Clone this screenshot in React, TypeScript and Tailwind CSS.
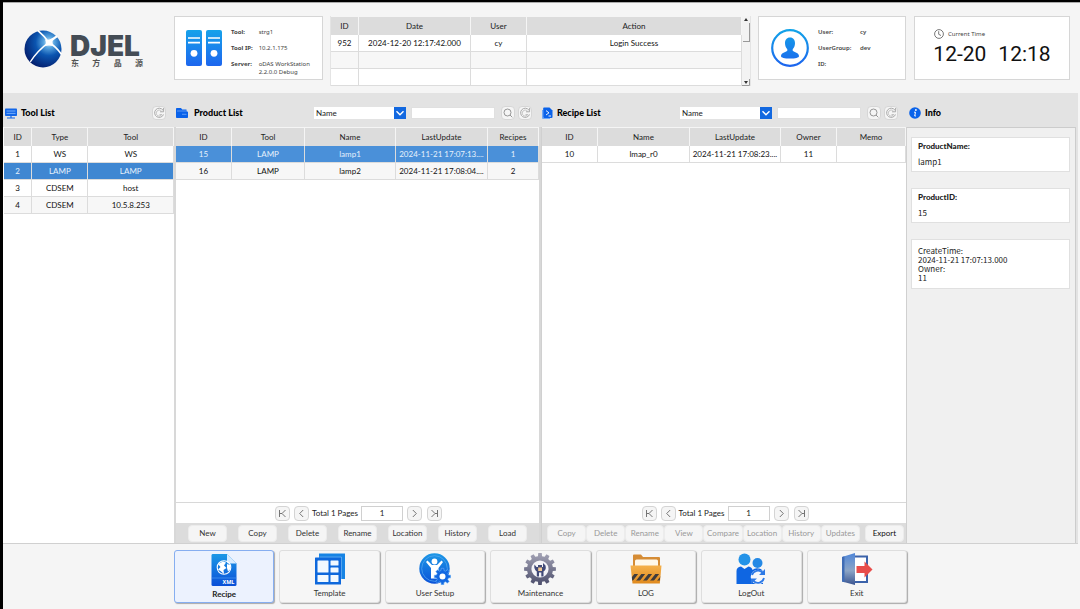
import React from "react";

const cell = "h-[17px] overflow-hidden whitespace-nowrap border-b border-r border-[#dcdcdc] p-0 text-center font-normal";

type TableProps = {
  label: string;
  widths: number[];
  heads: string[];
  rows: string[][];
  selected?: number;
  tone?: string;
};

function DataTable({ label, widths, heads, rows, selected = -1, tone = "bg-[#4a90d9]" }: TableProps) {
  const total = widths.reduce((a, b) => a + b, 0);
  return (
    <table aria-label={label} className="w-full table-fixed border-separate border-spacing-0 text-[8px] leading-3 text-[#111]">
      <colgroup>
        {widths.map((w, i) => (
          <col key={i} style={{ width: `${(w / total) * 100}%` }} />
        ))}
      </colgroup>
      <thead>
        <tr>
          {heads.map((h) => (
            <th key={h} scope="col" className="h-[19px] border-r border-t border-[#f5f5f5] bg-[#dcdcdc] p-0 text-center font-normal text-[#222]">
              {h}
            </th>
          ))}
        </tr>
      </thead>
      <tbody>
        {rows.map((r, i) => (
          <tr key={i} className={i === selected ? `${tone} text-[#e6f1fc]` : i % 2 ? "bg-[#f7f7f7]" : "bg-white"}>
            {r.map((c, j) => (
              <td key={j} className={cell}>
                {c}
              </td>
            ))}
          </tr>
        ))}
      </tbody>
    </table>
  );
}

function Globe() {
  return (
    <svg viewBox="0 0 40 40" className="size-[38px] shrink-0" aria-hidden="true">
      <defs>
        <radialGradient id="globe" cx="0.66" cy="0.32" r="0.72">
          <stop offset="0" stopColor="#e8f7ff" />
          <stop offset="0.2" stopColor="#5aa6e0" />
          <stop offset="0.5" stopColor="#0b55b0" />
          <stop offset="1" stopColor="#04206f" />
        </radialGradient>
      </defs>
      <circle cx="20" cy="20" r="19.5" fill="url(#globe)" />
      <g stroke="#fff" fill="none" strokeLinecap="round">
        <path d="M15 1 Q21 6 26 13" strokeWidth="1.8" />
        <path d="M26 13 Q33 17 39 25" strokeWidth="1.8" />
        <path d="M26 13 Q14 22 7 33" strokeWidth="1.4" />
        <path d="M26 13 L34 7" strokeWidth="2.4" />
      </g>
      <path d="M22 10 Q26 11.500 31 8 Q29 13 31 17 Q26 15.500 22 17 Q24 13 22 10Z" fill="#fff" />
    </svg>
  );
}

function Servers() {
  return (
    <svg viewBox="0 0 36 36" className="size-9 shrink-0" aria-hidden="true">
      <defs>
        <linearGradient id="srv" x1="0" y1="0" x2="0" y2="1">
          <stop offset="0" stopColor="#17a2ea" />
          <stop offset="1" stopColor="#1d66ee" />
        </linearGradient>
      </defs>
      {[0, 20].map((x) => (
        <g key={x}>
          <rect x={x} y="0" width="16" height="36" rx="2" fill="url(#srv)" />
          <path d={`M${x + 2} 8h12M${x + 2} 12.7h12`} stroke="#fff" strokeWidth="1.7" />
          <circle cx={x + 8} cy="23.3" r="3.4" fill="#fff" />
        </g>
      ))}
    </svg>
  );
}

function Avatar() {
  return (
    <svg viewBox="0 0 38 38" className="size-[38px] shrink-0" aria-hidden="true">
      <defs>
        <linearGradient id="ava" x1="0" y1="0" x2="0" y2="38" gradientUnits="userSpaceOnUse">
          <stop offset="0" stopColor="#12a5e8" />
          <stop offset="1" stopColor="#1d63ee" />
        </linearGradient>
      </defs>
      <circle cx="19" cy="19" r="17.8" fill="none" stroke="url(#ava)" strokeWidth="2.2" />
      <path d="M19 8.6c3.4 0 5 2.5 5 5.6 0 2.6-1 4.600-2.300 6v1.500c1.500 1.300 6.300 2 6.300 5.300 0 1.800-3.600 2.600-9 2.600s-9-.8-9-2.600c0-3.300 4.800-4 6.300-5.300v-1.500c-1.300-1.400-2.300-3.400-2.300-6 0-3.100 1.600-5.600 5-5.600Z" fill="url(#ava)" />
    </svg>
  );
}

function ClockIcon() {
  return (
    <svg viewBox="0 0 10 10" className="size-[10px]" fill="none" stroke="#555" strokeWidth="0.8" aria-hidden="true">
      <circle cx="5" cy="5" r="4.4" />
      <path d="M4.700 2.200V5.300L7 6.500" />
    </svg>
  );
}

const ToolListIcon = () => (
  <svg viewBox="0 0 12 11" className="h-[11px] w-3" aria-hidden="true">
    <rect y="0.500" width="12" height="7.500" rx="0.800" fill="#1266e8" />
    <path d="M1.500 3h9M1.500 5.400h9" stroke="#8fc0ff" strokeWidth="0.800" />
    <path d="M6 8v1.800M2 10h8" stroke="#1266e8" strokeWidth="1.200" />
  </svg>
);
const ProductIcon = () => (
  <svg viewBox="0 0 12 10" className="h-[10px] w-3" aria-hidden="true">
    <path d="M0 .800Q0 0 .800 0H5L6.200 1.500H10.500V3.500H11.200Q12 3.500 12 4.300V9.200Q12 10 11.200 10H.800Q0 10 0 9.200Z" fill="#0a62ea" />
    <path d="M1 3h9M6 6.300h4.500" stroke="#7fb2fb" strokeWidth="0.700" />
  </svg>
);
const RecipeIcon = () => (
  <svg viewBox="0 0 11 12" className="h-3 w-[11px]" aria-hidden="true">
    <path d="M2 0.500H7.500L10.500 3.500V10Q10.500 11 9.500 11H2Q1.200 11 1.200 10V1.500Q1.200 .500 2 .500Z" fill="#0a62ea" />
    <path d="M0.500 3V11.500H8" stroke="#6ea8f8" fill="none" />
    <path d="M4 3.600l3 2.200L4 8M6.500 9h2.500" stroke="#fff" strokeWidth="0.900" fill="none" />
  </svg>
);
const InfoIcon = () => (
  <svg viewBox="0 0 12 12" className="size-3" aria-hidden="true">
    <circle cx="6" cy="6" r="5.800" fill="#0a63ea" />
    <circle cx="6.900" cy="3" r="0.900" fill="#fff" />
    <path d="M5 5.200h1.500L5.700 9q.500.300 1.300-.300" stroke="#fff" fill="none" strokeWidth="1" />
  </svg>
);

const miniButton = "flex size-[14px] shrink-0 items-center justify-center rounded-sm border border-[#d6d6d6] bg-[#f5f5f5] p-0";

function RefreshButton({ label }: { label: string }) {
  return (
    <button type="button" aria-label={label} className={miniButton}>
      <svg viewBox="0 0 12 12" className="size-3 shrink-0" fill="none" aria-hidden="true">
        <path d="M10 3.200A4.600 4.600 0 1 0 10.500 7.500" stroke="#aaa" strokeWidth="1" />
        <path d="M8.600 4.200A3 3 0 1 0 8.900 7.500H6.500" stroke="#b5b5b5" strokeWidth="0.800" />
        <path d="M10.600 1v3.800H7" stroke="#aaa" strokeWidth="1" />
      </svg>
    </button>
  );
}

function SearchButton({ label }: { label: string }) {
  return (
    <button type="button" aria-label={label} className={miniButton}>
      <svg viewBox="0 0 10 10" className="size-[10px] shrink-0" fill="none" stroke="#8c8c8c" strokeWidth="0.900" aria-hidden="true">
        <circle cx="4.500" cy="4.500" r="3.500" />
        <path d="M7 7l2.300 2.300" />
      </svg>
    </button>
  );
}

function Filter({ name }: { name: string }) {
  return (
    <div className="flex items-center">
      <div className="relative mr-[5px] flex h-3 w-[92px]">
        <select aria-label={`${name} filter field`} className="h-3 w-full appearance-none rounded-none bg-white pl-[2px] text-[8px] leading-3 text-[#222] outline-none">
          <option>Name</option>
        </select>
        <span className="pointer-events-none absolute right-0 top-0 flex size-3 items-center justify-center bg-[#1268e0]">
          <svg viewBox="0 0 10 10" className="size-[10px]" fill="none" stroke="#fff" strokeWidth="1.400" aria-hidden="true">
            <path d="M1.500 3.300L5 6.800L8.500 3.300" />
          </svg>
        </span>
      </div>
      <input type="text" aria-label={`${name} filter text`} className="mr-[6px] h-3 w-[84px] border border-[#e0e0e0] bg-white px-1 text-[8px] outline-none" />
      <div className="flex gap-[3px]">
        <SearchButton label={`Search ${name}`} />
        <RefreshButton label={`Refresh ${name}`} />
      </div>
    </div>
  );
}

function PagerButton({ label, d }: { label: string; d: string }) {
  return (
    <button type="button" aria-label={label} className="flex size-[15px] shrink-0 items-center justify-center rounded-sm border border-[#d4d4d4] bg-[#f5f5f5]">
      <svg viewBox="0 0 9 9" className="size-[9px] shrink-0" fill="none" stroke="#666" strokeWidth="0.900" aria-hidden="true">
        <path d={d} />
      </svg>
    </button>
  );
}

function Pager({ name }: { name: string }) {
  return (
    <div className="flex h-[21px] items-center justify-center border-t border-[#d8d8d8] bg-white pl-[2px] text-[8px] text-[#222]">
      <div className="flex gap-1">
        <PagerButton label={`${name} first page`} d="M1.500 1v7M7.500 1L4 4.500L7.500 8M2 4.500h2" />
        <PagerButton label={`${name} previous page`} d="M6.200 1L2.700 4.500L6.200 8" />
      </div>
      <span className="w-[52px] whitespace-nowrap text-center">Total 1 Pages</span>
      <input type="text" aria-label={`${name} page`} defaultValue="1" className="mr-1 h-[15px] w-[42px] border border-[#d0d0d0] bg-white text-center outline-none" />
      <div className="flex gap-[5px]">
        <PagerButton label={`${name} next page`} d="M2.800 1L6.300 4.500L2.800 8" />
        <PagerButton label={`${name} last page`} d="M7.500 1v7M1.500 1L5 4.500L1.500 8M5 4.500h2" />
      </div>
    </div>
  );
}

const actionButton = "h-[17px] flex-1 rounded-sm border border-[#ececec] bg-[#f5f5f5] p-0 text-center text-[8px] leading-3 whitespace-nowrap";

function Title({ icon, text, children }: { icon: React.ReactNode; text: string; children?: React.ReactNode }) {
  return (
    <div className="flex h-[34px] items-center pb-0 pt-[6px]">
      {icon}
      <h2 className="ml-1 text-[9px] font-black leading-3 text-black">{text}</h2>
      <div className="ml-auto mr-[9px]">{children}</div>
    </div>
  );
}

function InfoCard({ title, children }: { title: string; children: React.ReactNode }) {
  return (
    <section className="flex h-[35px] flex-col justify-between border border-[#e0e0e0] bg-white px-[6px] pb-[3px] pt-[2px]">
      <h3 className="font-['Lato',sans-serif] font-black leading-3">{title}</h3>
      <p className="leading-3">{children}</p>
    </section>
  );
}

const XmlIcon = () => (
  <svg viewBox="0 0 26 32" className="h-8 w-[26px]" aria-hidden="true">
    <defs>
      <linearGradient id="nb" x1="0" y1="0" x2="0" y2="32" gradientUnits="userSpaceOnUse">
        <stop offset="0" stopColor="#1c98e6" />
        <stop offset="1" stopColor="#0a4fd8" />
      </linearGradient>
    </defs>
    <path d="M1.500 0H16L25.500 9.500V30.500Q25.500 32 24 32H2Q.500 32 .500 30.500V1.500Q.500 0 1.500 0Z" fill="url(#nb)" />
    <path d="M16 0V8Q16 9.500 17.500 9.500H25.500Z" fill="#d7ebff" />
    <circle cx="13" cy="13.500" r="6.800" fill="none" stroke="#fff" strokeWidth="1.100" />
    <path d="M7 10L12 7.500L15 8.500L13 11.500L15.500 14L12.500 16L13 20L9.500 17L7 15.500L9.500 13ZM16 10L19 11L19.500 15L17 17.500L16 14Z" fill="#fff" />
    <path d="M1 24h24.500" stroke="#4c9cf2" strokeWidth="0.700" />
    <text x="11.500" y="30" fontSize="5.500" fontWeight="700" fill="#fff" fontFamily="Noto Sans">XML</text>
  </svg>
);

const TemplateIcon = () => (
  <svg viewBox="0 0 32 32" className="size-8" aria-hidden="true">
    <path d="M5 0.500H31V26H26V5H5Z" fill="#1784e4" />
    <rect x="1" y="4.500" width="26" height="27" rx="0.500" fill="#0e68dc" />
    <path d="M5.500 4H27.500V26" fill="none" stroke="#7dbbf5" strokeWidth="0.600" />
    <g fill="#f2f9ff">
      <rect x="3.500" y="7.500" width="11" height="12" rx="0.500" />
      <rect x="16.500" y="7.500" width="8" height="5" rx="0.500" />
      <rect x="16.500" y="14.500" width="8" height="5" rx="0.500" />
      <rect x="3.500" y="22" width="11" height="7" rx="0.500" />
      <rect x="16.500" y="22" width="8" height="7" rx="0.500" />
    </g>
  </svg>
);

const gearPath = (cx: number, cy: number, r: number, r2: number, n: number) => {
  const pts: string[] = [];
  for (let i = 0; i < n; i++) {
    const a = (i / n) * Math.PI * 2;
    const s = Math.PI / n;
    [[-0.6, r], [-0.42, r2], [0.42, r2], [0.6, r]].forEach(([k, q]) => {
      pts.push(`${(cx + Math.sin(a + k * s) * q).toFixed(2)} ${(cy - Math.cos(a + k * s) * q).toFixed(2)}`);
    });
  }
  return `M${pts.join("L")}Z`;
};

const UserSetupIcon = () => (
  <svg viewBox="0 0 32 32" className="size-8" aria-hidden="true">
    <circle cx="15.500" cy="15.500" r="15.200" fill="url(#nb)" />
    <circle cx="15.500" cy="15.500" r="12.800" fill="none" stroke="#58aaf0" strokeWidth="0.700" />
    <circle cx="15.500" cy="8.500" r="2.900" fill="#fff" />
    <path d="M8.500 7.500L13 12H18L22.500 7.500L24 9L19.500 15V20L18 25.500H12V15L7 9Z" fill="#fff" />
    <path d={gearPath(23.5, 23.5, 6.2, 8.3, 8)} fill="#1268e2" stroke="#6fb3f5" strokeWidth="0.600" />
    <circle cx="23.500" cy="23.500" r="3" fill="#fff" />
  </svg>
);

const MaintenanceIcon = () => (
  <svg viewBox="0 0 32 32" className="size-8" aria-hidden="true">
    <defs>
      <linearGradient id="gear" x1="0" y1="0" x2="0" y2="1">
        <stop offset="0" stopColor="#a3a3b5" />
        <stop offset="1" stopColor="#4c4e6c" />
      </linearGradient>
    </defs>
    <path d={gearPath(16, 16, 13, 16, 12)} fill="url(#gear)" />
    <circle cx="16" cy="16" r="8.600" fill="#f4f4f8" />
    <path d="M10.500 11.500L12.500 14H14V12H18V14H19V10L21.500 12.500Q22.500 17 19.500 18.500V23.500H17.300V19.500H15V23.500H12.800V18.500Q9.500 16 10.500 11.500Z" fill="#424a78" />
    <rect x="14.200" y="14.500" width="3.800" height="3.500" fill="#f0c890" />
  </svg>
);

const LogIcon = () => (
  <svg viewBox="0 0 32 32" className="size-8" aria-hidden="true">
    <defs>
      <linearGradient id="fold" x1="0" y1="0" x2="0" y2="1">
        <stop offset="0" stopColor="#f5b14c" />
        <stop offset="1" stopColor="#e08a1e" />
      </linearGradient>
      <clipPath id="foldclip"><path d="M1.500 21H30.500L29.800 27.500H2.200Z" /></clipPath>
    </defs>
    <path d="M3 2.500Q3 1.500 4 1.500H11L13 4H29Q30 4 30 5V14H3Z" fill="#d58c35" />
    <path d="M5 8Q5 6.500 6.500 6.500H26.500Q28 6.500 28 8V14H5Z" fill="#fff8ea" />
    <path d="M.500 12.500H31.500L29.800 30.500H2.500Z" fill="url(#fold)" />
    <g clipPath="url(#foldclip)" stroke="#3e3b3d" strokeWidth="3">
      <path d="M0 29L7 20M7 29L14 20M14 29L21 20M21 29L28 20M28 29L35 20" />
    </g>
  </svg>
);

const LogoutIcon = () => (
  <svg viewBox="0 0 32 32" className="size-8" aria-hidden="true">
    <circle cx="9.500" cy="6.500" r="6" fill="#2493e8" />
    <circle cx="22.500" cy="10" r="5" fill="#2589e5" />
    <path d="M1.500 31V18Q1.500 14 6 13.500L9.500 16L13.500 13.500Q17 14 17.500 17Q20 14.500 24 15.500Q28 16 28 20V31Z" fill="#0f66e2" />
    <circle cx="23" cy="24" r="7.300" fill="#f5f7fb" />
    <path d="M17 22A6.300 6.300 0 0 1 27.500 19.500M29 25A6.300 6.300 0 0 1 18.500 28" fill="none" stroke="#2d79e6" strokeWidth="1.800" />
    <path d="M30 16V22H24ZM16 31V25.500H22Z" fill="#2d79e6" />
  </svg>
);

const ExitIcon = () => (
  <svg viewBox="0 0 32 32" className="size-8" aria-hidden="true">
    <defs>
      <linearGradient id="door" x1="0" y1="0" x2="0" y2="1">
        <stop offset="0" stopColor="#4f86d8" />
        <stop offset="0.550" stopColor="#8ca5c6" />
        <stop offset="1" stopColor="#3a5490" />
      </linearGradient>
    </defs>
    <path d="M14 3.500H26V29H14" fill="#fff" stroke="#3c63aa" strokeWidth="2" />
    <path d="M1 4L14 0V32L1 28.500Z" fill="url(#door)" />
    <path d="M1 4L3.500 3.300V29.200L1 28.500Z" fill="#3f6cb5" />
    <path d="M15.500 13H23.500V8.500L31.500 16.500L23.500 24.500V20H15.500Z" fill="#e84d4b" />
  </svg>
);

const nav: [string, () => React.JSX.Element][] = [
  ["Recipe", XmlIcon],
  ["Template", TemplateIcon],
  ["User Setup", UserSetupIcon],
  ["Maintenance", MaintenanceIcon],
  ["LOG", LogIcon],
  ["LogOut", LogoutIcon],
  ["Exit", ExitIcon],
];

const card = "flex h-16 items-center border border-[#d6d6d6] bg-white";

export default function App() {
  return (
    <div className="flex min-h-screen flex-col border-l-[3px] border-t-2 border-black bg-[#f5f5f5] font-['Lato','Noto_Sans_CJK_SC',sans-serif] text-[8px] leading-3 text-[#222]">
      <header className="flex h-[91px] items-start border-t border-[#aaa] pr-[10px] pt-[13px]">
        <div className="flex w-[171px] items-center gap-2 pl-[21px] pt-[14px]">
          <Globe />
          <div className="w-[74px] pt-1">
            <div className="font-['Inter',sans-serif] text-[28px] font-black leading-6 text-[#444c55]">DJEL</div>
            <div className="flex justify-between px-[1px] font-['Noto_Sans_CJK_SC',sans-serif] text-[8px] font-bold leading-[10px] text-[#555]">
              <span>东</span><span>方</span><span>晶</span><span>源</span>
            </div>
          </div>
        </div>

        <section className={`${card} w-[149px] shrink-0 gap-[9px] pl-[11px]`}>
          <Servers />
          <dl className="grid grid-cols-[auto_1fr] gap-x-[6px] gap-y-1 whitespace-nowrap pt-2 font-['Noto_Sans','Noto_Sans_CJK_SC',sans-serif] text-[6px] leading-[8px] text-[#444]">
            <dt className="pb-1 font-bold">Tool:</dt><dd>strg1</dd>
            <dt className="pb-1 font-bold">Tool IP:</dt><dd>10.2.1.175</dd>
            <dt className="font-bold">Server:</dt><dd>oDAS WorkStation<br />2.2.0.0 Debug</dd>
          </dl>
        </section>

        <section className="mx-[7px] flex flex-1 border-x border-[#e4e4e4] bg-white">
          <div className="min-w-0 flex-1">
            <DataTable
              label="Events"
              widths={[28, 112, 56, 215]}
              heads={["ID", "Date", "User", "Action"]}
              rows={[["952", "2024-12-20 12:17:42.000", "cy", "Login Success"], ["", "", "", ""], ["", "", "", ""]]}
            />
          </div>
          <div className="flex w-2 flex-col items-center bg-[#f3f3f3]" aria-hidden="true">
            <svg viewBox="0 0 8 7" className="h-[7px] w-2"><path d="M4 2L6 5H2Z" fill="#333" /></svg>
            <div className="h-[19px] w-[7px] border-b border-r border-[#999] bg-[#f3f3f3]" />
            <svg viewBox="0 0 8 7" className="mt-auto h-[7px] w-2"><path d="M7.500 0V6.500H0" stroke="#999" fill="none" /><path d="M4 5L6 2H2Z" fill="#333" /></svg>
          </div>
        </section>

        <section className={`${card} mr-2 w-[148px] shrink-0 gap-[9px] pl-3`}>
          <Avatar />
          <dl className="grid grid-cols-[42px_1fr] gap-y-2 whitespace-nowrap font-['Noto_Sans',sans-serif] text-[6px] font-semibold leading-[8px] text-[#444]">
            <dt>User:</dt><dd>cy</dd>
            <dt>UserGroup:</dt><dd>dev</dd>
            <dt>ID:</dt><dd />
          </dl>
        </section>

        <section className={`${card} w-[156px] shrink-0 flex-col justify-center`}>
          <div className="flex w-full items-center gap-1 pl-[19px] font-['Noto_Sans',sans-serif] text-[6px] text-[#444]">
            <ClockIcon />
            <h2>Current Time</h2>
          </div>
          <time dateTime="12-20T12:18" className="flex gap-3 font-['Roboto',sans-serif] text-[21px] leading-7 text-[#111]">
            <span>12-20</span><span>12:18</span>
          </time>
        </section>
      </header>

      <main className="mr-[2px] grid flex-1 grid-cols-[172fr_366fr_366fr_171fr] border-b border-[#d0d0d0] bg-[#e3e3e3]">
        <section className="flex min-w-0 flex-col">
          <div className="pl-[2px]">
            <Title icon={<ToolListIcon />} text="Tool List"><RefreshButton label="Refresh tools" /></Title>
          </div>
          <div className="flex-1 border-r border-[#d8d8d8] bg-white pl-[1px]">
            <DataTable
              label="Tool List"
              widths={[28, 56, 85]}
              heads={["ID", "Type", "Tool"]}
              rows={[["1", "WS", "WS"], ["2", "LAMP", "LAMP"], ["3", "CDSEM", "host"], ["4", "CDSEM", "10.5.8.253"]]}
              selected={1}
              tone="bg-[#3f87d2]"
            />
          </div>
        </section>

        <section className="flex min-w-0 flex-col">
          <div className="pl-[1px]">
            <Title icon={<span className="mr-[2px]"><ProductIcon /></span>} text="Product List"><Filter name="products" /></Title>
          </div>
          <div className="flex flex-1 flex-col border-l border-r-2 border-[#d8d8d8] bg-white">
            <div className="flex-1">
              <DataTable
                label="Product List"
                widths={[56, 73, 91, 92, 51]}
                heads={["ID", "Tool", "Name", "LastUpdate", "Recipes"]}
                rows={[["15", "LAMP", "lamp1", "2024-11-21 17:07:13....", "1"], ["16", "LAMP", "lamp2", "2024-11-21 17:08:04....", "2"]]}
                selected={0}
              />
            </div>
            <Pager name="Products" />
            <div className="flex h-5 items-center gap-[11px] bg-[#dcdcdc] px-3 text-[#333]">
              {["New", "Copy", "Delete", "Rename", "Location", "History", "Load"].map((b) => (
                <button key={b} type="button" className={actionButton}>{b}</button>
              ))}
            </div>
          </div>
        </section>

        <section className="flex min-w-0 flex-col">
          <div className="pl-[1px]">
            <Title icon={<RecipeIcon />} text="Recipe List"><Filter name="recipes" /></Title>
          </div>
          <div className="flex flex-1 flex-col border-x border-[#d0d0d0] bg-white">
            <div className="flex-1">
              <DataTable
                label="Recipe List"
                widths={[56, 92, 91, 56, 69]}
                heads={["ID", "Name", "LastUpdate", "Owner", "Memo"]}
                rows={[["10", "lmap_r0", "2024-11-21 17:08:23....", "11", ""]]}
              />
            </div>
            <Pager name="Recipes" />
            <div className="flex h-5 items-center bg-[#dcdcdc] pl-[5px] pr-[2px]">
              <div className="flex flex-[8] text-[#999]">
                {["Copy", "Delete", "Rename", "View", "Compare", "Location", "History", "Updates"].map((b) => (
                  <button key={b} type="button" disabled className={actionButton}>{b}</button>
                ))}
              </div>
              <div className="ml-[5px] flex flex-1 text-[#111]">
                <button type="button" className={actionButton}>Export</button>
              </div>
            </div>
          </div>
        </section>

        <aside className="flex min-w-0 flex-col">
          <div className="pl-[2px]">
            <Title icon={<InfoIcon />} text="Info" />
          </div>
          <div className="mr-[2px] flex flex-1 flex-col gap-4 border-r border-t border-[#ccc] bg-[#f0f0f0] pl-1 pr-[5px] pt-[9px] font-['Noto_Sans_CJK_SC',sans-serif] text-[8px]">
            <InfoCard title="ProductName:">lamp1</InfoCard>
            <InfoCard title="ProductID:">15</InfoCard>
            <section className="border border-[#e0e0e0] bg-white px-[6px] py-[6px] leading-[9px]">
              <p>CreateTime:</p><p>2024-11-21 17:07:13.000</p><p>Owner:</p><p>11</p>
            </section>
          </div>
        </aside>
      </main>

      <nav className="grid h-[65px] grid-cols-[171fr_733fr_173fr] items-start pt-[6px]">
        <div className="col-start-2 grid grid-cols-7 gap-[5px]">
          {nav.map(([label, Icon], i) => (
            <button
              key={label}
              type="button"
              className={
                i === 0
                  ? "flex h-[53px] flex-col items-center gap-[2px] rounded-[3px] border border-[#86aef0] bg-[#ecf2fe] pt-[3px] font-bold shadow-[1px_1px_1px_#aaa]"
                  : "flex h-[53px] flex-col items-center gap-[2px] rounded-[3px] border border-[#dedede] bg-[#f6f6f6] pt-[2px] text-[#333] shadow-[1px_1px_1px_#aaa]"
              }
            >
              <Icon />
              <span>{label}</span>
            </button>
          ))}
        </div>
      </nav>
    </div>
  );
}
